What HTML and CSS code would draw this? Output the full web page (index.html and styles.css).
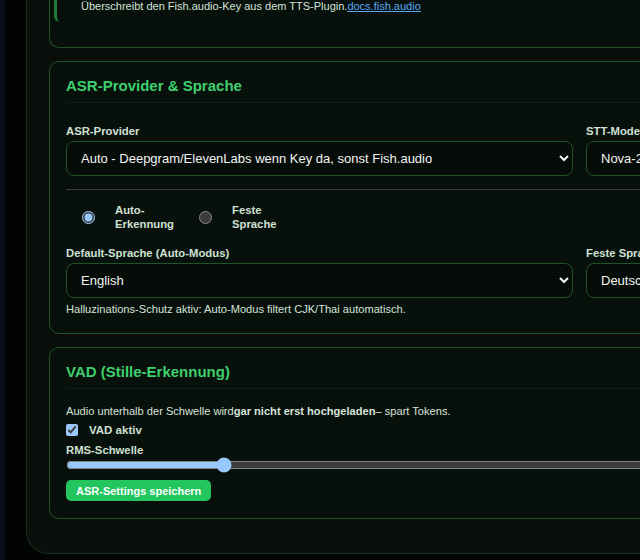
FILE: index.html
```html
<!DOCTYPE html>
<html lang="de">
<head>
    <meta charset="UTF-8">
    <meta name="viewport" content="width=device-width, initial-scale=1.0">
    <title>ASR Einstellungen</title>
    <link rel="stylesheet" href="styles.css">
</head>
<body>

    <div class="sidebar-edge"></div>

    <div class="panel">

        <div class="card card-cut">
            <div class="note">
                Überschreibt den Fish.audio-Key aus dem TTS-Plugin.<a href="#">docs.fish.audio</a>
            </div>
        </div>

        <div class="card">
            <h3 class="card-title">ASR-Provider &amp; Sprache</h3>

            <div class="grid">
                <div class="field">
                    <label class="label">ASR-Provider</label>
                    <select class="select">
                        <option>Auto - Deepgram/ElevenLabs wenn Key da, sonst Fish.audio</option>
                    </select>
                </div>
                <div class="field">
                    <label class="label">STT-Modell</label>
                    <select class="select">
                        <option>Nova-2 (Deepgram)</option>
                    </select>
                </div>
            </div>

            <hr class="divider">

            <div class="radios">
                <label class="radio"><input type="radio" name="mode" checked><span>Auto-<br>Erkennung</span></label>
                <label class="radio"><input type="radio" name="mode"><span>Feste<br>Sprache</span></label>
            </div>

            <div class="grid">
                <div class="field">
                    <label class="label">Default-Sprache (Auto-Modus)</label>
                    <select class="select">
                        <option>English</option>
                    </select>
                </div>
                <div class="field">
                    <label class="label">Feste Sprache</label>
                    <select class="select">
                        <option>Deutsch</option>
                    </select>
                </div>
            </div>
            <p class="hint">Halluzinations-Schutz aktiv: Auto-Modus filtert CJK/Thai automatisch.</p>
        </div>

        <div class="card card-vad">
            <h3 class="card-title">VAD (Stille-Erkennung)</h3>

            <p class="hint intro">Audio unterhalb der Schwelle wird<b>gar nicht erst hochgeladen</b>– spart Tokens.</p>
            <label class="check"><input type="checkbox" checked><span>VAD aktiv</span></label>
            <label class="label label-range">RMS-Schwelle</label>
            <input type="range" class="range" min="0" max="1000" value="185">
            <button class="button">ASR-Settings speichern</button>
        </div>

    </div>

</body>
</html>
```

FILE: styles.css
```css
html, body {
    margin: 0;
    padding: 0;
    height: 100%;
    overflow: hidden;
}

body {
    font-family: "Liberation Sans", Arial, sans-serif;
    background-color: #020403;
    color: #d4e4d8;
    color-scheme: dark;
    display: flex;
    align-items: flex-start;
}

.sidebar-edge {
    flex: 0 0 5px;
    height: 100%;
    background: #0a0f1b;
}

.panel {
    flex: 0 0 860px;
    margin-left: 21px;
    background: #0a0f0c;
    border: 1px solid #15301b;
    border-top: none;
    border-radius: 0 0 0 22px;
    padding: 0 22px 34px 22px;
}

.card {
    background: #08100b;
    border: 1px solid #1d5528;
    border-radius: 10px;
    padding: 15px 16px 17px 16px;
    margin-bottom: 13px;
}

.card:last-child {
    margin-bottom: 0;
}

.card-cut {
    border-top: none;
    border-radius: 0 0 10px 10px;
    padding-top: 0;
    padding-bottom: 25px;
    padding-left: 4px;
}

.note {
    border-left: 3px solid #1f7a35;
    border-radius: 0 0 0 6px;
    padding: 0 0 10px 24px;
    font-size: 11px;
    line-height: 12px;
    color: #d4e4d8;
}

.note a {
    color: #5aa8f5;
}

.card-title {
    margin: 0 0 22px 0;
    padding: 0 0 8px 0;
    font-size: 15px;
    font-weight: bold;
    color: #3ecf6e;
    border-bottom: 1px solid #111c14;
}

.card-vad .card-title {
    margin-bottom: 16px;
}

.grid {
    display: grid;
    grid-template-columns: 507px 220px;
    gap: 13px;
}

.field {
    display: flex;
    flex-direction: column;
}

.label {
    display: block;
    font-size: 11.3px;
    font-weight: bold;
    color: #cfe0d3;
    margin-bottom: 4px;
}

.select {
    height: 35px;
    background: #060c08;
    border: 1px solid #1d5528;
    border-radius: 8px;
    color: #f2f5f3;
    font-family: "Liberation Sans", Arial, sans-serif;
    font-size: 13px;
    padding: 0 10px;
}

.divider {
    border: none;
    border-top: 1px solid #3a3d40;
    margin: 13px 0 13px 0;
}

.radios {
    display: flex;
    gap: 25px;
    padding-left: 16px;
    margin-bottom: 16px;
}

.radio {
    display: flex;
    align-items: center;
    gap: 20px;
    font-size: 11.3px;
    font-weight: bold;
    line-height: 14px;
    color: #cfe0d3;
}

.radio input {
    margin: 0;
    width: 13px;
    height: 13px;
}

.hint {
    margin: 5px 0 0 0;
    font-size: 11.1px;
    line-height: 13px;
    color: #d4e4d8;
}

.hint.intro {
    margin-top: 0;
}

.check {
    display: flex;
    align-items: center;
    gap: 11px;
    font-size: 11.5px;
    font-weight: bold;
    color: #cfe0d3;
    margin: 6px 0 8px 0;
}

.check input {
    margin: 0;
    width: 12px;
    height: 12px;
}

.label-range {
    margin-bottom: 1px;
}

.range {
    display: block;
    width: 100%;
    margin: 0 0 7px 0;
}

.button {
    background: #22c55e;
    color: white;
    border: none;
    border-radius: 5px;
    font-family: "Liberation Sans", Arial, sans-serif;
    font-size: 11px;
    font-weight: bold;
    padding: 4px 10px;
    height: 21px;
}
```
